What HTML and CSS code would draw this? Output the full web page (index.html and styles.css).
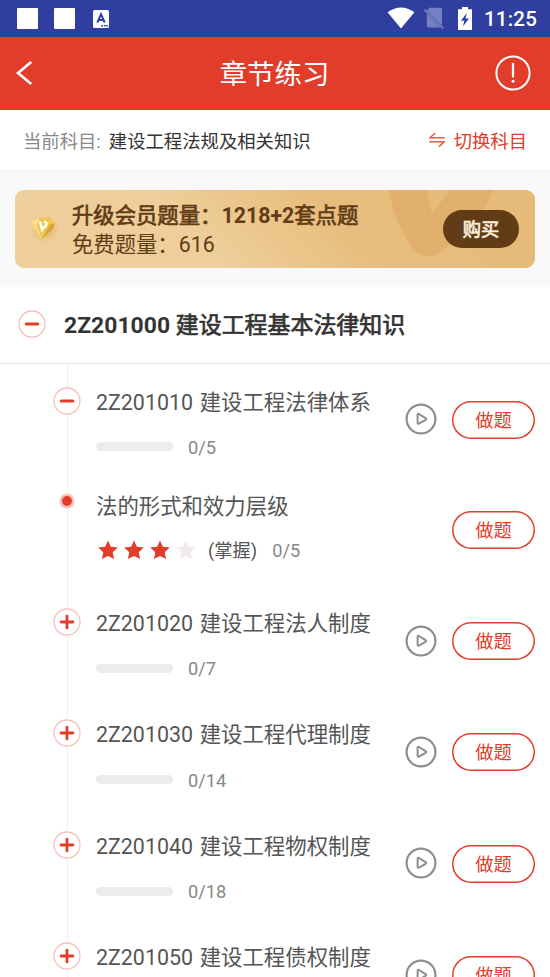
FILE: index.html
```html
<!DOCTYPE html>
<html lang="zh-CN">
<head>
<meta charset="utf-8">
<title>章节练习</title>
<link rel="stylesheet" href="styles.css">
</head>
<body>
<svg class="defs" width="0" height="0">
  <symbol id="minus" viewBox="0 0 28 28"><circle cx="14" cy="14" r="13" fill="#fff" stroke="#f8c1bb" stroke-width="1.3"/><path d="M8.2 14H19.8" stroke="#e23c2a" stroke-width="3" stroke-linecap="round"/></symbol>
  <symbol id="plus" viewBox="0 0 28 28"><circle cx="14" cy="14" r="13" fill="#fff" stroke="#f8c1bb" stroke-width="1.3"/><path d="M8.1 14H19.9M14 8.1V19.9" stroke="#e23c2a" stroke-width="2.8" stroke-linecap="round"/></symbol>
  <symbol id="play" viewBox="0 0 32 32"><circle cx="16" cy="16" r="14.4" fill="none" stroke="#8e8e8e" stroke-width="2.2"/><path d="M12.6 11.8V19.8Q12.6 21.2 13.9 20.6L20.6 16.8Q21.8 16 20.6 15.2L13.9 11Q12.6 10.4 12.6 11.8Z" fill="none" stroke="#8e8e8e" stroke-width="2" stroke-linejoin="round"/></symbol>
  <symbol id="star" viewBox="0 0 20 20"><path d="M10 .4L12.9 6.8L19.8 7.6L14.7 12.2L16.1 19L10 15.9L3.9 19L5.3 12.2L.2 7.6L7.1 6.8Z" fill="currentColor"/></symbol>
</svg>

<div class="statusbar">
  <span class="box"></span>
  <span class="box"></span>
  <svg class="ime" width="16" height="18" viewBox="0 0 16 18"><rect width="16" height="18" rx="1.5" fill="#fff"/><path d="M4.3 12.6L8 4.2L11.7 12.6M5.8 10H10.2" fill="none" stroke="#303f9f" stroke-width="2"/><path d="M8.3 15.8H15" stroke="#303f9f" stroke-width="1.4" stroke-dasharray="1.7 .8"/></svg>
  <span class="grow"></span>
  <svg class="wifi" width="28" height="22" viewBox="0 0 28 22"><path d="M.6 5.2Q14-4.4 27.4 5.2L14 21.6Z" fill="#fff"/></svg>
  <svg class="sim" width="20" height="22" viewBox="0 0 20 22"><path d="M5.2 .8H16.5Q18 .8 18 2.3V18.4L3.4 3.8ZM2.8 6.4L16.6 20.5H4.3Q2.8 20.5 2.8 19Z" fill="#7480c1"/><path d="M.6 2.6L19.2 21.4" stroke="#7984c3" stroke-width="1.7"/></svg>
  <svg class="battery" width="14" height="23" viewBox="0 0 14 23"><path d="M4 0H10V2.2H14V23H0V2.2H4Z" fill="#fff"/><path d="M8.8 6L3 13.8H6.3L5.1 19.2L11 11.4H7.6Z" fill="#303f9f"/></svg>
  <span class="clock">11:25</span>
</div>

<header class="header">
  <svg class="back" width="18" height="26" viewBox="0 0 18 26"><path d="M15.2 2L2 13L15.2 24" fill="none" stroke="#fff" stroke-width="2.7"/></svg>
  <h1>章节练习</h1>
  <svg class="info" width="36" height="36" viewBox="0 0 36 36"><circle cx="18" cy="18" r="16.6" fill="none" stroke="#fff" stroke-width="2"/><path d="M18 9V21.6" stroke="#fff" stroke-width="2.3" stroke-linecap="round"/><circle cx="18" cy="26.2" r="1.5" fill="#fff"/></svg>
</header>

<div class="subject">
  <span class="label">当前科目:</span>
  <span class="name">建设工程法规及相关知识</span>
  <svg width="16" height="16" viewBox="0 0 16 16"><path d="M15.8 5.8H1L6.2 1M.2 9.8H15L10 14.6" fill="none" stroke="#e8594b" stroke-width="1.5"/></svg>
  <span class="switch">切换科目</span>
</div>

<section class="promo">
  <div class="banner">
    <svg class="mark" width="106" height="67" viewBox="0 0 106 67"><path d="M0 0H38L43 24L61 0H105Q94 24 73 43Q60 56 52 62Q36 72 25 59Q5 34 0 0Z" fill="#e0b06c"/></svg>
    <svg class="gem" width="34" height="34" viewBox="0 0 34 34">
      <defs><radialGradient id="glow"><stop offset="0" stop-color="#d49a3c" stop-opacity=".6"/><stop offset="1" stop-color="#dca64e" stop-opacity="0"/></radialGradient></defs>
      <ellipse cx="17.5" cy="19.5" rx="15" ry="13" fill="url(#glow)"/>
      <path d="M3 13L9 7.5L22 6L28 12L26 18L15 28Z" fill="#eac04e"/>
      <path d="M3 13L9 7.5L13 8L10 14Z" fill="#f8e494"/><path d="M3 13L10 14L15 28Z" fill="#f5d980"/><path d="M22 6L28 12L22 14Z" fill="#f4c948"/><path d="M22 14L28 12L26 18L15 28Z" fill="#d8a735"/><path d="M10 14L13 8L22 6L22 14L15 28Z" fill="#edc75e"/>
      <path d="M13 10.5L15 18.5L19 14.5Q20.8 11 17 10.8" fill="none" stroke="#fffdf3" stroke-width="2.5"/>
    </svg>
    <div class="promo-text">
      <div class="strong"><span class="cn">升级会员题量：</span>1218+2<span class="cn">套点题</span></div>
      <div>免费题量：616</div>
    </div>
    <div class="buy"><span class="cn">购买</span></div>
  </div>
</section>

<div class="chapter">
  <svg width="28" height="28"><use href="#minus"/></svg>
  <h2>2Z201000 <span class="cn">建设工程基本法律知识</span></h2>
</div>

<main class="list">
  <div class="row first">
    <div class="rail"><svg width="28" height="28"><use href="#minus"/></svg></div>
    <div class="body"><div class="title">2Z201010 建设工程法律体系</div><div class="meta"><span class="bar"></span><span>0/5</span></div></div>
    <svg class="play" width="32" height="32"><use href="#play"/></svg><div class="do">做题</div>
  </div>
  <div class="row leaf">
    <div class="rail"><svg class="dot" width="16" height="16" viewBox="0 0 16 16"><circle cx="8" cy="8" r="7.6" fill="#f8c1bb"/><circle cx="8" cy="8" r="4.9" fill="#e23c2a"/></svg></div>
    <div class="body"><div class="title">法的形式和效力层级</div><div class="meta"><span class="stars"><svg width="20" height="20"><use href="#star"/></svg><svg width="20" height="20"><use href="#star"/></svg><svg width="20" height="20"><use href="#star"/></svg><svg class="off" width="20" height="20"><use href="#star"/></svg></span><span class="level">(掌握)</span><span>0/5</span></div></div>
    <div class="do">做题</div>
  </div>
  <div class="row">
    <div class="rail"><svg width="28" height="28"><use href="#plus"/></svg></div>
    <div class="body"><div class="title">2Z201020 建设工程法人制度</div><div class="meta"><span class="bar"></span><span>0/7</span></div></div>
    <svg class="play" width="32" height="32"><use href="#play"/></svg><div class="do">做题</div>
  </div>
  <div class="row">
    <div class="rail"><svg width="28" height="28"><use href="#plus"/></svg></div>
    <div class="body"><div class="title">2Z201030 建设工程代理制度</div><div class="meta"><span class="bar"></span><span>0/14</span></div></div>
    <svg class="play" width="32" height="32"><use href="#play"/></svg><div class="do">做题</div>
  </div>
  <div class="row">
    <div class="rail"><svg width="28" height="28"><use href="#plus"/></svg></div>
    <div class="body"><div class="title">2Z201040 建设工程物权制度</div><div class="meta"><span class="bar"></span><span>0/18</span></div></div>
    <svg class="play" width="32" height="32"><use href="#play"/></svg><div class="do">做题</div>
  </div>
  <div class="row">
    <div class="rail"><svg width="28" height="28"><use href="#plus"/></svg></div>
    <div class="body"><div class="title">2Z201050 建设工程债权制度</div></div>
    <svg class="play" width="32" height="32"><use href="#play"/></svg><div class="do">做题</div>
  </div>
</main>
</body>
</html>
```
FILE: styles.css
```css
* { box-sizing: border-box; }
body {
  margin: 0;
  width: 550px;
  height: 977px;
  overflow: hidden;
  display: flex;
  flex-direction: column;
  background: #fff;
  color: #333;
  font-family: Roboto, "Noto Sans CJK SC", sans-serif;
  white-space: nowrap;
}
body > * { flex: none; }
svg { display: block; flex: none; }
.defs { position: absolute; }
h1, h2 { margin: 0; }
.cn { font-weight: 400; -webkit-text-stroke: .7px currentColor; }

.statusbar {
  height: 37px;
  padding: 0 13px 0 17px;
  display: flex;
  align-items: center;
  background: #303f9f;
}
.box { width: 21px; height: 21px; margin-right: 16px; border-radius: 1px; background: #fff; }
.ime { margin-left: 2px; }
.grow { flex: 1; }
.wifi { margin: -1px 9px 0 0; }
.sim { margin: -1px 14px 0 0; }
.battery { margin-right: 12px; }
.clock { color: #fff; font-size: 20.5px; font-weight: 500; line-height: 37px; letter-spacing: .2px; padding-top: 1px; }

.header {
  height: 73px;
  padding: 0 19px 0 16px;
  display: flex;
  align-items: center;
  justify-content: space-between;
  background: #e23c2a;
}
.back { margin-top: -1px; }
.header h1 { color: #fff; font-size: 27.4px; font-weight: 400; line-height: 40px; padding: 2px 0 0 20px; }
.info { margin: -1px 0 0; }

.subject {
  height: 61px;
  padding: 0 23px 0 23px;
  display: flex;
  align-items: center;
  font-size: 18.35px;
  border-bottom: 1px solid #f0f0f0;
}
.label { color: #888; }
.name { margin-left: 8px; flex: 1; }
.switch { margin-left: 9px; color: #e23c2a; }

.promo { height: 116px; padding: 19px 15px; background: #f9f9f9; }
.banner {
  position: relative;
  height: 78px;
  padding: 0 16px 0 12px;
  display: flex;
  align-items: center;
  border-radius: 9px;
  overflow: hidden;
  background: linear-gradient(45deg, #efcf9c 0%, #eecf9b 35%, #e7bd7d 62%, #e6ba79 100%);
  color: #613c17;
}
.mark { position: absolute; left: 374px; top: 0; }
.gem { margin-top: -2px; }
.promo-text { flex: 1; margin-left: 11px; padding-top: 2px; font-size: 21.35px; line-height: 29px; }
.strong { font-weight: 700; }
.buy {
  position: relative;
  width: 76px;
  height: 38px;
  border-radius: 19px;
  background: #613c17;
  color: #fbeedb;
  font-size: 18.3px;
  line-height: 40px;
  text-align: center;
}

.chapter {
  height: 77px;
  padding-left: 18px;
  display: flex;
  align-items: center;
  border-bottom: 1px solid #e9e9e9;
}
.chapter svg { margin-top: -3px; }
.chapter h2 { margin-left: 18px; padding-top: 1px; font-size: 22.95px; line-height: 32px; font-weight: 700; }

.list { flex: 1; min-height: 0; overflow: hidden; }
.row { height: 111.4px; display: flex; align-items: flex-start; padding-right: 15px; }
.row.first { height: 110.5px; }
.row.leaf { height: 111px; }
.rail {
  width: 28px;
  height: 100%;
  margin-left: 53px;
  padding-top: 22.5px;
  display: flex;
  justify-content: center;
  background: linear-gradient(#f0f0f0, #f0f0f0) 14px 0 / 1px 100% no-repeat;
}
.dot { margin-top: -4px; }
.body { flex: 1; margin-left: 15px; padding-top: 22.6px; }
.title { color: #555; font-size: 21.4px; line-height: 32px; word-spacing: 1.4px; }
.meta { height: 24px; margin-top: 17.4px; display: flex; align-items: center; color: #888; font-size: 18.3px; line-height: 24px; }
.leaf .body { padding-top: 16px; }
.leaf .meta { margin-top: 16px; }
.bar { width: 77px; height: 9px; margin-right: 15px; margin-top: -2px; border-radius: 5px; background: #ececec; }
.stars { display: flex; gap: 6px; margin-left: 2px; margin-top: -1px; color: #e23c2a; }
.stars .off { color: #f6e9e9; }
.level { margin: 0 15px 0 12px; color: #555; }
.play { margin: 39px 15px 0 0; }
.do {
  width: 83px;
  height: 38px;
  margin-top: 36.5px;
  box-shadow: inset 0 0 0 1.5px #e23c2a;
  border-radius: 19px;
  color: #e23c2a;
  font-size: 18.3px;
  line-height: 39px;
  text-align: center;
}
```
